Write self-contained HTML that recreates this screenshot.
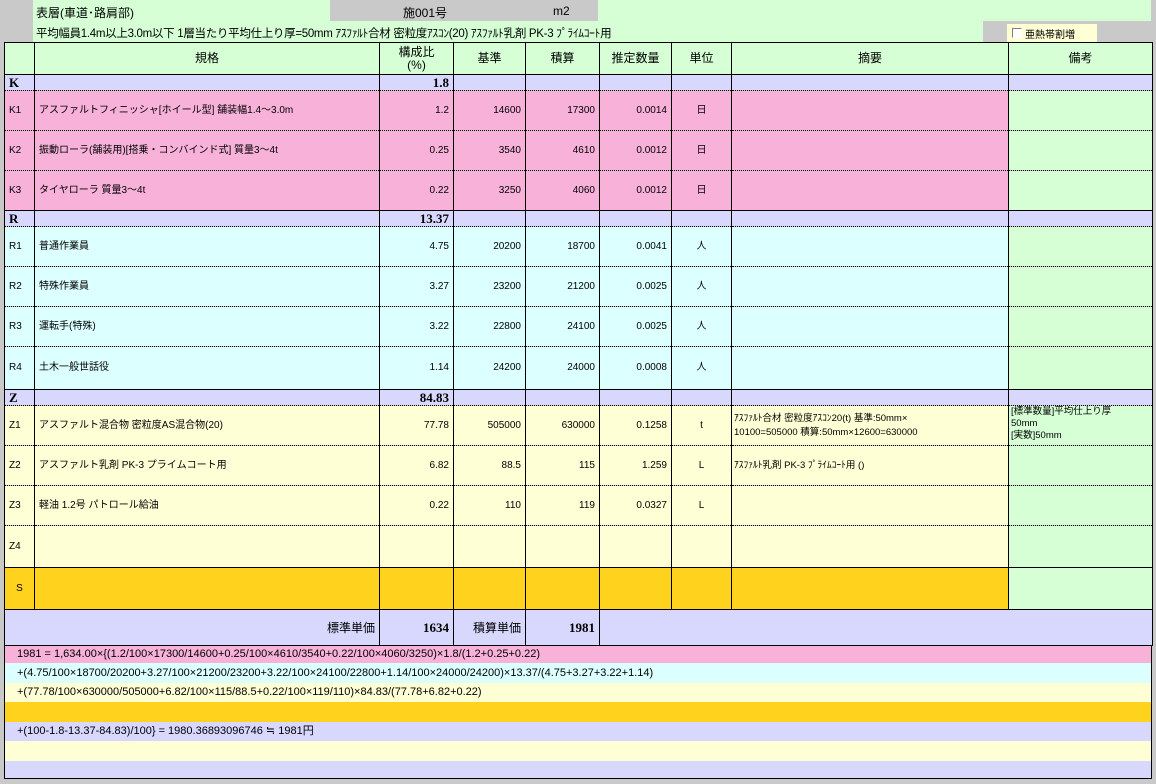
<!DOCTYPE html>
<html><head><meta charset="utf-8"><style>
*{margin:0;padding:0;box-sizing:border-box}
body{width:1156px;height:784px;background:#c9c9c9;position:relative;overflow:hidden;font-family:"Liberation Sans","Noto Sans CJK JP",sans-serif;font-size:11px;color:#000}
.abs{position:absolute}
table{position:absolute;left:4px;top:42px;border-collapse:collapse;table-layout:fixed;width:1148px}
td{border-left:1px solid #000;border-right:1px solid #000;border-bottom:1px dotted #000;padding:0 4px;white-space:nowrap;overflow:hidden;font-size:10px;line-height:12px}
.h td{background:#d6ffd6;border:1px solid #000;text-align:center;font-size:12px;line-height:13px}
.sec td{background:#d8d8ff;border-top:1px solid #000;height:16px;line-height:14px}
.sec td.b{font-family:"Liberation Serif",serif;font-weight:bold;font-size:13px}
.r{text-align:right}.c{text-align:center}
.pk td{background:#f8b2da}.pk td.g{background:#d6ffd6}
.cy td{background:#dcffff}.cy td.g{background:#d6ffd6}
.ye td{background:#ffffd6}.ye td.g{background:#d6ffd6}
.go td{background:#ffd21e;border-top:1px solid #000}.go td.g{background:#d6ffd6}
.tot td{background:#d8d8ff;border:1px solid #000;font-size:12px}
.tot td.n{font-family:"Liberation Serif",serif;font-weight:bold;font-size:13px}
.f{position:absolute;left:4px;width:1148px;font-size:11px;padding-left:12px;line-height:18px;border-left:1px solid #000;border-right:1px solid #000}
</style></head><body>
<div class="abs" style="left:33px;top:0;width:297px;height:21px;background:#d6ffd6"></div>
<div class="abs" style="left:598px;top:0;width:553px;height:21px;background:#d6ffd6"></div>
<div class="abs" style="left:36px;top:4px;font-size:12px">表層(車道･路肩部)</div>
<div class="abs" style="left:403px;top:4px;font-size:12px">施001号</div>
<div class="abs" style="left:553px;top:4px;font-size:12px">m2</div>
<div class="abs" style="left:33px;top:21px;width:950px;height:21px;background:#d6ffd6"></div>
<div class="abs" style="left:36px;top:25px;font-size:11.5px;letter-spacing:-0.3px">平均幅員1.4m以上3.0m以下 1層当たり平均仕上り厚=50mm ｱｽﾌｧﾙﾄ合材 密粒度ｱｽｺﾝ(20) ｱｽﾌｧﾙﾄ乳剤 PK-3 ﾌﾟﾗｲﾑｺｰﾄ用</div>
<div class="abs" style="left:1007px;top:24px;width:90px;height:19px;background:#ffffd6"></div>
<div class="abs" style="left:1012px;top:28px;width:10px;height:10px;border:1px solid #808080;border-right-color:#fff;border-bottom-color:#fff;background:#fff"></div>
<div class="abs" style="left:1025px;top:26px;font-size:10px">亜熱帯割増</div>
<table>
<colgroup><col style="width:30px"><col style="width:345px"><col style="width:74px"><col style="width:72px"><col style="width:74px"><col style="width:72px"><col style="width:60px"><col style="width:277px"><col style="width:144px"></colgroup>
<tr class="h" style="height:32px"><td></td><td>規格</td><td>構成比<br>(%)</td><td>基準</td><td>積算</td><td>推定数量</td><td>単位</td><td>摘要</td><td>備考</td></tr>
<tr class="sec"><td class="b">K</td><td></td><td class="b r">1.8</td><td></td><td></td><td></td><td></td><td></td><td></td></tr>
<tr class="pk" style="height:40px"><td>K1</td><td>アスファルトフィニッシャ[ホイール型] 舗装幅1.4～3.0m</td><td class="r">1.2</td><td class="r">14600</td><td class="r">17300</td><td class="r">0.0014</td><td class="c">日</td><td></td><td class="g"></td></tr>
<tr class="pk" style="height:40px"><td>K2</td><td>振動ローラ(舗装用)[搭乗・コンバインド式] 質量3～4t</td><td class="r">0.25</td><td class="r">3540</td><td class="r">4610</td><td class="r">0.0012</td><td class="c">日</td><td></td><td class="g"></td></tr>
<tr class="pk" style="height:40px"><td>K3</td><td>タイヤローラ 質量3～4t</td><td class="r">0.22</td><td class="r">3250</td><td class="r">4060</td><td class="r">0.0012</td><td class="c">日</td><td></td><td class="g"></td></tr>
<tr class="sec"><td class="b">R</td><td></td><td class="b r">13.37</td><td></td><td></td><td></td><td></td><td></td><td></td></tr>
<tr class="cy" style="height:40px"><td>R1</td><td>普通作業員</td><td class="r">4.75</td><td class="r">20200</td><td class="r">18700</td><td class="r">0.0041</td><td class="c">人</td><td></td><td class="g"></td></tr>
<tr class="cy" style="height:40px"><td>R2</td><td>特殊作業員</td><td class="r">3.27</td><td class="r">23200</td><td class="r">21200</td><td class="r">0.0025</td><td class="c">人</td><td></td><td class="g"></td></tr>
<tr class="cy" style="height:40px"><td>R3</td><td>運転手(特殊)</td><td class="r">3.22</td><td class="r">22800</td><td class="r">24100</td><td class="r">0.0025</td><td class="c">人</td><td></td><td class="g"></td></tr>
<tr class="cy" style="height:43px"><td>R4</td><td>土木一般世話役</td><td class="r">1.14</td><td class="r">24200</td><td class="r">24000</td><td class="r">0.0008</td><td class="c">人</td><td></td><td class="g"></td></tr>
<tr class="sec"><td class="b">Z</td><td></td><td class="b r">84.83</td><td></td><td></td><td></td><td></td><td></td><td></td></tr>
<tr class="ye" style="height:40px"><td>Z1</td><td>アスファルト混合物 密粒度AS混合物(20)</td><td class="r">77.78</td><td class="r">505000</td><td class="r">630000</td><td class="r">0.1258</td><td class="c">t</td><td style="font-size:9.5px;line-height:14px;padding:0 2px">ｱｽﾌｧﾙﾄ合材 密粒度ｱｽｺﾝ20(t) 基準:50mm×<br>10100=505000 積算:50mm×12600=630000</td><td class="g" style="font-size:9.5px;line-height:12px;padding:0 2px;vertical-align:top">[標準数量]平均仕上り厚<br>50mm<br>[実数]50mm</td></tr>
<tr class="ye" style="height:40px"><td>Z2</td><td>アスファルト乳剤 PK-3 プライムコート用</td><td class="r">6.82</td><td class="r">88.5</td><td class="r">115</td><td class="r">1.259</td><td class="c">L</td><td style="font-size:9.5px;padding:0 2px">ｱｽﾌｧﾙﾄ乳剤 PK-3 ﾌﾟﾗｲﾑｺｰﾄ用 ()</td><td class="g"></td></tr>
<tr class="ye" style="height:40px"><td>Z3</td><td>軽油 1.2号 パトロール給油</td><td class="r">0.22</td><td class="r">110</td><td class="r">119</td><td class="r">0.0327</td><td class="c">L</td><td></td><td class="g"></td></tr>
<tr class="ye" style="height:42px"><td>Z4</td><td></td><td></td><td></td><td></td><td></td><td></td><td></td><td class="g"></td></tr>
<tr class="go" style="height:42px"><td class="c">S</td><td></td><td></td><td></td><td></td><td></td><td></td><td></td><td class="g"></td></tr>
<tr class="tot" style="height:36px"><td colspan="2" class="r" style="border-right:1px solid #000">標準単価</td><td class="r n">1634</td><td class="r">積算単価</td><td class="r n">1981</td><td colspan="4" style="border-left:1px solid #000"></td></tr>
</table>
<div class="f" style="top:645px;height:18px;background:#f8b2da;border-top:1px solid #000;line-height:16px">1981 = 1,634.00×{(1.2/100×17300/14600+0.25/100×4610/3540+0.22/100×4060/3250)×1.8/(1.2+0.25+0.22)</div>
<div class="f" style="top:663px;height:20px;line-height:20px;background:#dcffff">+(4.75/100×18700/20200+3.27/100×21200/23200+3.22/100×24100/22800+1.14/100×24000/24200)×13.37/(4.75+3.27+3.22+1.14)</div>
<div class="f" style="top:683px;height:19px;background:#ffffd6">+(77.78/100×630000/505000+6.82/100×115/88.5+0.22/100×119/110)×84.83/(77.78+6.82+0.22)</div>
<div class="f" style="top:702px;height:20px;background:#ffd21e"></div>
<div class="f" style="top:722px;height:19px;background:#d8d8ff">+(100-1.8-13.37-84.83)/100} = 1980.36893096746 ≒ 1981円</div>
<div class="f" style="top:741px;height:20px;background:#ffffd6"></div>
<div class="f" style="top:761px;height:18px;background:#d8d8ff;border-bottom:1px solid #000"></div>
</body></html>
